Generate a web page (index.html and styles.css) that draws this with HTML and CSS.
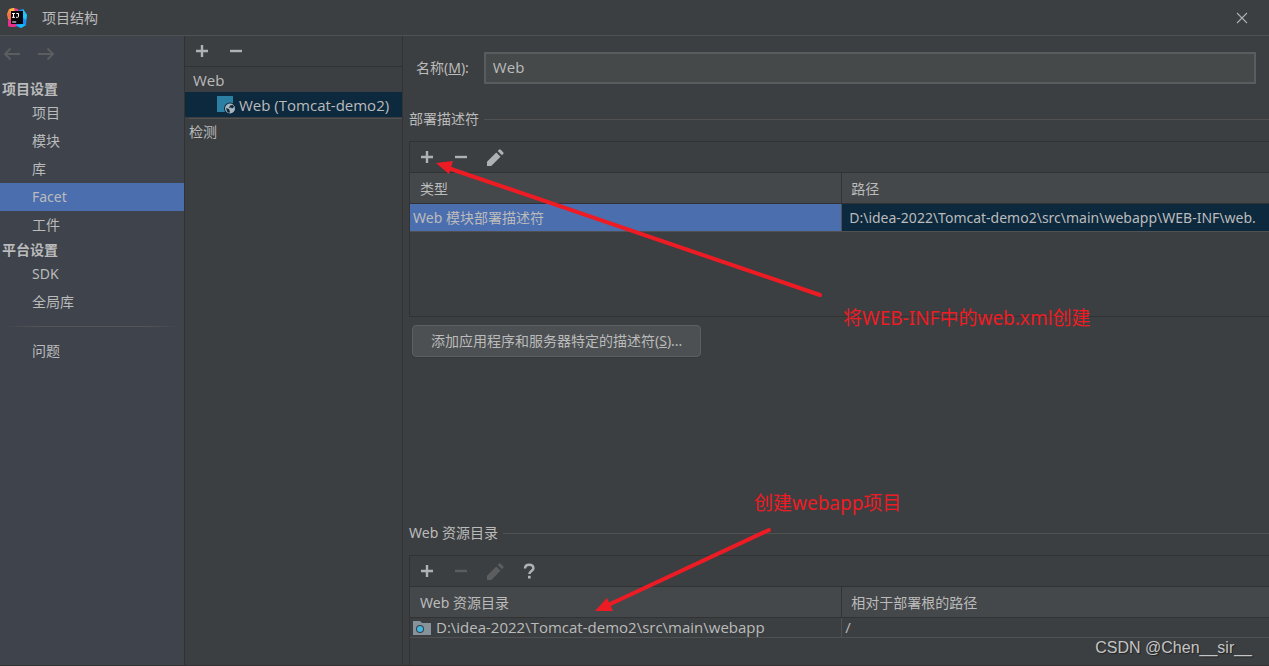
FILE: index.html
```html
<!DOCTYPE html>
<html lang="zh-CN">
<head>
<meta charset="utf-8">
<title>项目结构</title>
<link rel="stylesheet" href="styles.css">
</head>
<body>
<svg class="defs" aria-hidden="true">
  <symbol id="plus" viewBox="0 0 16 16"><path d="M2 8h12M8 2v12" stroke="currentColor" stroke-width="2.4" fill="none"/></symbol>
  <symbol id="minus" viewBox="0 0 16 16"><path d="M2 8h12" stroke="currentColor" stroke-width="2.4" fill="none"/></symbol>
  <symbol id="pencil" viewBox="0 0 18 18"><path d="M0 18v-4.500L9.800 3.700l4.500 4.500L4.500 18zM11.300 2.200l1.300-1.300a1.400 1.400 0 0 1 2 0l2.500 2.500a1.400 1.400 0 0 1 0 2l-1.300 1.300z" fill="currentColor"/></symbol>
  <symbol id="help" viewBox="0 0 16 16"><path d="M3 5.600C3 2.900 4.700 1.700 7.200 1.700s4.200 1.300 4.200 3.500c0 2.700-4 2.900-4 5.800" stroke="currentColor" stroke-width="2.500" fill="none"/><path d="M6 12.800h2.700v2.700H6z" fill="currentColor"/></symbol>
</svg>
<div class="window">
  <header class="titlebar">
    <svg class="logo" viewBox="0 0 20 20" aria-hidden="true">
      <path d="M2 1l5-1 5 5-2 8-9-2-1-5z" fill="#f98a3c"/>
      <path d="M3 1l4-1 3 4-6 2z" fill="#fdc13b"/>
      <path d="M0 6l5-2v9l-4 1 1-4z" fill="#fb6a4a"/>
      <path d="M7 0l4 1 2 4H8z" fill="#ec3f91"/>
      <path d="M1 12l6-1 5 6-4 2H3l-2-1z" fill="#ed2d8a"/>
      <path d="M12 2l4-1 4 6-1 10-5 3-5-2 3-6z" fill="#168cf5"/>
      <path d="M16 1l4 6-1 5-4-3z" fill="#20c4f6"/>
      <path d="M9 17l6-1 4 1-5 3z" fill="#18b9f5"/>
      <path d="M4 3h12v13H4z" fill="#08070b"/>
      <path d="M5 5.500h3M6.500 5.500v4M5 9.300h3M9.300 5.500h2.200v3q0 .800-1 .800H9M5.200 14h4" stroke="#fff" stroke-width="1" fill="none"/>
    </svg>
    <h1 class="title">项目结构</h1>
    <button class="close" aria-label="关闭"><svg viewBox="0 0 12 12"><path d="M1 1l10 10M11 1L1 11" stroke="currentColor" stroke-width="1.100" fill="none"/></svg></button>
  </header>
  <div class="body">
    <nav class="nav">
      <div class="history">
        <button aria-label="后退" disabled><svg viewBox="0 0 18 14"><path d="M17 7H2M7.500 1.500L2 7l5.500 5.500" stroke="currentColor" stroke-width="2" fill="none"/></svg></button>
        <button aria-label="前进" disabled><svg viewBox="0 0 18 14"><path d="M1 7h15M10.500 1.500L16 7l-5.500 5.500" stroke="currentColor" stroke-width="2" fill="none"/></svg></button>
      </div>
      <h2 class="group">项目设置</h2>
      <a class="item" href="#">项目</a>
      <a class="item" href="#">模块</a>
      <a class="item" href="#">库</a>
      <a class="item active" href="#" aria-current="page">Facet</a>
      <a class="item" href="#">工件</a>
      <h2 class="group">平台设置</h2>
      <a class="item" href="#">SDK</a>
      <a class="item" href="#">全局库</a>
      <hr class="nav-rule">
      <a class="item" href="#">问题</a>
    </nav>
    <section class="facets">
      <div class="toolbar">
        <button aria-label="添加"><svg><use href="#plus"/></svg></button>
        <button aria-label="移除"><svg><use href="#minus"/></svg></button>
      </div>
      <ul class="tree">
        <li class="node latin">Web</li>
        <li class="node child selected latin">
          <svg class="facet-icon" viewBox="0 0 18 18" aria-hidden="true">
            <path d="M0 0h16v16H0z" fill="#2b7fa3"/>
            <circle cx="13" cy="12.500" r="6" fill="#0d293e"/>
            <circle cx="13" cy="12.500" r="5" fill="#a9b6bf"/>
            <path d="M9 12l3 1 1 3-1 1-2-1.500zM13 9.500l3-.500 1 2-2 1.500-1-1-2 .500z" fill="#0d293e"/>
          </svg>
          Web (Tomcat-demo2)
        </li>
      </ul>
      <hr class="tree-rule">
      <div class="detect">检测</div>
    </section>
    <main class="main">
      <div class="name-row">
        <label for="name">名称(<u>M</u>):</label>
        <input id="name" class="latin" type="text" value="Web">
      </div>
      <h2 class="section">部署描述符</h2>
      <div class="panel descriptors">
        <div class="toolbar">
          <button aria-label="添加"><svg><use href="#plus"/></svg></button>
          <button aria-label="移除"><svg><use href="#minus"/></svg></button>
          <button aria-label="编辑"><svg class="wide"><use href="#pencil"/></svg></button>
        </div>
        <table>
          <thead><tr><th>类型</th><th>路径</th></tr></thead>
          <tbody><tr class="picked"><td>Web 模块部署描述符</td><td>D:\idea-2022\Tomcat-demo2\src\main\webapp\WEB-INF\web.</td></tr></tbody>
        </table>
      </div>
      <button class="add">添加应用程序和服务器特定的描述符(<u>S</u>)...</button>
      <h2 class="section resources-title">Web 资源目录</h2>
      <div class="panel resources">
        <div class="toolbar">
          <button aria-label="添加"><svg><use href="#plus"/></svg></button>
          <button aria-label="移除" disabled><svg><use href="#minus"/></svg></button>
          <button aria-label="编辑" disabled><svg class="wide"><use href="#pencil"/></svg></button>
          <button aria-label="帮助"><svg><use href="#help"/></svg></button>
        </div>
        <table>
          <thead><tr><th>Web 资源目录</th><th>相对于部署根的路径</th></tr></thead>
          <tbody><tr><td class="latin"><span class="dir"><svg viewBox="0 0 18 14" aria-hidden="true"><path d="M0 0h7l2 2h9v12H0z" fill="#87939a"/><circle cx="7" cy="8" r="4" fill="#3c3f41"/><circle cx="7" cy="8" r="3" fill="#40b6e0"/></svg>D:\idea-2022\Tomcat-demo2\src\main\webapp</span></td><td class="latin">/</td></tr></tbody>
        </table>
      </div>
    </main>
  </div>
  <svg class="arrows" viewBox="0 0 1269 666" aria-hidden="true">
    <path d="M820 295L448 168M769 530L606 606" stroke="#ed1c24" stroke-width="4" stroke-linecap="round"/>
    <path d="M436 163l17-2-4 13zM595 611l12-13 6 13z" fill="#ed1c24"/>
  </svg>
  <p class="note note-xml">将WEB-INF中的web.xml创建</p>
  <p class="note note-webapp">创建webapp项目</p>
  <p class="watermark">CSDN @Chen__sir__</p>
</div>
</body>
</html>
```
FILE: styles.css
```css
* { box-sizing: border-box; }

body {
  margin: 0;
  background: #3c3f41;
  color: #bbbbbb;
  font: 14px/20px "Noto Sans", "Noto Sans CJK SC", sans-serif;
}

h1, h2, p, ul { margin: 0; padding: 0; font-size: inherit; font-weight: normal; }
hr { margin: 0; border: 0; }

button {
  display: flex;
  align-items: center;
  justify-content: center;
  padding: 0;
  border: 0;
  background: none;
  color: #afb1b3;
  font: inherit;
}
button:disabled { color: #5b5d5f; }
a { color: inherit; text-decoration: none; }
.defs { display: none; }

.window {
  position: relative;
  display: flex;
  flex-direction: column;
  height: 100vh;
  overflow: hidden;
  border-bottom: 1px solid #323232;
}

.titlebar {
  display: flex;
  flex: none;
  align-items: center;
  height: 36px;
  padding: 0 20px 0 7px;
  border-bottom: 1px solid #515151;
}
.logo { width: 20px; height: 20px; }
.title { flex: 1; margin-left: 15px; }
.close svg { width: 14px; height: 12px; }

.body {
  display: grid;
  flex: 1;
  grid-template-columns: 184px 219px minmax(0, 1fr);
  min-height: 0;
}

.nav { background: #3e434c; }
.history {
  display: flex;
  gap: 16px;
  height: 42px;
  padding: 0 3px 6px;
}
.history svg { width: 18px; height: 14px; }
.group {
  padding-left: 2px;
  font-weight: bold;
  line-height: 21px;
}
.item {
  display: block;
  padding-left: 32px;
  line-height: 28px;
}
.active { background: #4b6eaf; }
.nav-rule {
  height: 1px;
  margin: 10px 4px;
  background: linear-gradient(90deg, transparent, #555555 20%, #555555 80%, transparent);
}

.facets {
  border: solid #323232;
  border-width: 0 1px;
}
.toolbar {
  display: flex;
  align-items: center;
  gap: 18px;
  height: 31px;
  padding-left: 9px;
  border-bottom: 1px solid #323232;
}
.toolbar svg { display: block; width: 16px; height: 16px; }
.toolbar .wide { width: 17px; height: 17px; }
.tree { list-style: none; }
.node {
  display: flex;
  align-items: center;
  height: 25px;
  padding-left: 8px;
}
.child { gap: 4px; padding-left: 32px; }
.selected { background: #0d293e; }
.facet-icon { width: 18px; height: 18px; }
.tree-rule {
  height: 1px;
  margin: 1px 0 0 4px;
  background: #515151;
}
.detect { padding-left: 4px; line-height: 26px; }

.main {
  display: flex;
  flex-direction: column;
  padding-left: 6px;
}
.name-row {
  display: flex;
  align-items: center;
  gap: 15px;
  margin: 16px 13px 25px 7px;
}
.name-row input {
  flex: 1;
  min-width: 0;
  height: 32px;
  padding: 0 7px 2px;
  border: 2px solid #5a5d5f;
  background: #45494a;
  color: #bbbbbb;
  font-family: inherit;
}
.latin, .name-row .latin { font-family: "Open Sans", sans-serif; font-size: 15px; }

.section {
  display: flex;
  align-items: center;
  gap: 5px;
}
.section::after {
  flex: 1;
  height: 1px;
  background: #515151;
  content: "";
}

.panel {
  margin-top: 12px;
  border: solid #323232;
  border-width: 1px 0 1px 1px;
}
.descriptors { height: 176px; }
.resources { height: 110px; border-bottom: 0; }

table {
  width: 100%;
  border-collapse: separate;
  border-spacing: 0;
  table-layout: fixed;
}
th, td {
  overflow: hidden;
  text-align: left;
  font-weight: normal;
  white-space: nowrap;
}
th {
  height: 31px;
  padding: 1px 9px 0 10px;
  border-bottom: 1px solid #323232;
  background: #45484a;
}
th:first-child { width: 50.2%; }
th + th { padding-left: 9px; border-left: 1px solid #323232; }
td {
  height: 20px;
  padding: 0 3px;
  border-bottom: 1px solid #515151;
  line-height: 19px;
}
td + td { border-left: 1px solid #515151; }
.picked td { height: 28px; background: #4b6eaf; }
.picked td + td { padding: 0 0 0 7px; background: #0d293e; }
.dir { display: flex; align-items: center; gap: 5px; }
.dir svg { width: 18px; height: 14px; }

.add {
  display: block;
  align-self: flex-start;
  height: 32px;
  margin: 8px 3px;
  padding: 0 18px;
  border: 1px solid #5e6060;
  border-radius: 4px;
  background: #4c5052;
  box-shadow: 0 1px 1px #35383a;
  color: #bbbbbb;
}
.resources-title { margin-top: auto; }

.arrows {
  position: absolute;
  top: 0;
  left: 0;
  width: 1269px;
  height: 666px;
  fill: none;
  pointer-events: none;
}
.note {
  position: absolute;
  color: #ed1c24;
  font-size: 19px;
  line-height: 26px;
  white-space: nowrap;
}
.note-xml { top: 305px; left: 843px; }
.note-webapp { top: 490px; left: 754px; }
.watermark {
  position: absolute;
  right: 17px;
  bottom: 7px;
  color: #c4c5c6;
  font-family: "Liberation Sans", sans-serif;
  font-size: 16px;
  text-shadow: 1px 1px 1px #222222;
}
```
